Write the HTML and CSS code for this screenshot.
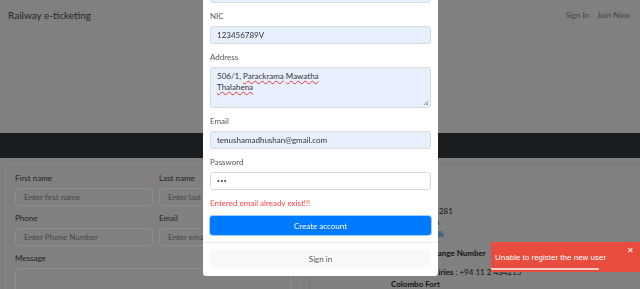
FILE: index.html
```html
<!DOCTYPE html>
<html lang="en">
<head>
    <meta charset="UTF-8">
    <meta name="viewport" content="width=device-width, initial-scale=1.0">
    <title>Railway e-ticketing</title>
    <link rel="stylesheet" href="styles.css">
</head>
<body>
    <!-- ナビバー (モーダル表示中なので暗い色) -->
    <nav class="navbar">
        <a href="#" class="brand">Railway e-ticketing</a>
        <div class="nav-links">
            <a href="#">Sign In</a>
            <a href="#">Join Now</a>
        </div>
    </nav>

    <div class="hero"></div>
    <div class="band"></div>

    <!-- お問い合わせセクション -->
    <div class="contact">
        <div class="card">
            <div class="row">
                <div class="field">
                    <label>First name</label>
                    <input type="text" placeholder="Enter first name">
                </div>
                <div class="field">
                    <label>Last name</label>
                    <input type="text" placeholder="Enter last name">
                </div>
                <div class="field">
                    <label>Phone</label>
                    <input type="text" placeholder="Enter Phone Number">
                </div>
                <div class="field">
                    <label>Email</label>
                    <input type="text" placeholder="Enter email">
                </div>
            </div>
            <div class="field">
                <label>Message</label>
                <textarea rows="3"></textarea>
            </div>
        </div>
        <div class="card info">
            <p>+94 11 2 434281</p>
            <p>+94 11 2 440</p>
            <p><a href="#">www.railway.lk</a></p>
            <p class="gap"><strong>General Exchange Number</strong></p>
            <p class="gap"><strong>Railway Enquiries</strong> : +94 11 2 434215</p>
            <p><strong>Colombo Fort</strong></p>
        </div>
    </div>

    <!-- 登録モーダル -->
    <div class="modal">
        <div class="modal-body">
            <div class="form-group">
                <input type="text" class="filled" value="">
            </div>
            <div class="form-group">
                <label>NIC</label>
                <input type="text" class="filled" value="123456789V">
            </div>
            <div class="form-group">
                <label>Address</label>
                <div class="textarea filled">506/1, <span class="typo">Parackrama</span> <span class="typo">Mawatha</span><br><span class="typo">Thalahena</span></div>
            </div>
            <div class="form-group">
                <label>Email</label>
                <input type="text" class="filled" value="tenushamadhushan@gmail.com">
            </div>
            <div class="form-group">
                <label>Password</label>
                <input type="password" class="pass" value="abc">
            </div>
            <p class="error">Entered email already exist!!!</p>
            <button class="btn btn-primary">Create account</button>
        </div>
        <div class="modal-footer">
            <button class="btn btn-light">Sign in</button>
        </div>
    </div>

    <!-- トースト通知 -->
    <div class="toast">
        <span>Unable to register the new user</span>
        <button class="toast-close">✕</button>
        <div class="toast-progress"></div>
    </div>
</body>
</html>
```

FILE: styles.css
```css
/* 背景ページはモーダルの影で暗くなった色をそのまま使う */
body {
    font-family: Lato, 'Open Sans', sans-serif;
    font-size: 8px;
    color: #141516;
    background: #808080;
    margin: 0;
    overflow: hidden;
}

a {
    text-decoration: none;
}

.navbar {
    display: flex;
    justify-content: space-between;
    align-items: center;
    height: 30px;
    padding: 0 10px 0 8px;
}

.brand {
    color: #262626;
    font-size: 10px;
}

.nav-links {
    display: flex;
    gap: 8px;
}

.nav-links a {
    color: #454545;
    font-size: 8px;
}

.hero {
    height: 103px;
}

.band {
    height: 25px;
    background: #1a1d20;
}

.contact {
    display: flex;
    gap: 8px;
    padding: 5px 0 0 5px;
}

.card {
    border: 1px solid #888;
    border-radius: 3px;
    padding: 9px 9px;
    width: 276px;
    height: 140px;
    flex-shrink: 0;
}

.row {
    display: grid;
    grid-template-columns: 138px 1fr;
    column-gap: 6px;
}

.field {
    margin-bottom: 7px;
}

.field label {
    display: block;
    color: #222;
    line-height: 11px;
    margin-bottom: 4px;
}

.field input,
.field textarea {
    box-sizing: border-box;
    width: 100%;
    height: 18px;
    border: 1px solid #8d8d8d;
    border-radius: 3px;
    padding: 0 8px;
    font-family: inherit;
    font-size: 8px;
    color: #333;
    background: #808080;
}

.field input::placeholder {
    color: #464849;
}

.field textarea {
    height: 40px;
    resize: none;
}

.info {
    width: 320px;
    border-color: #777;
    padding: 42px 10px 0 81px;
}

.info p {
    margin: 0;
    line-height: 11.5px;
    white-space: nowrap;
}

.info p.gap {
    margin-top: 7.5px;
}

.info a {
    color: #003e80;
}

.modal {
    position: fixed;
    left: 203px;
    bottom: 13px;
    width: 235px;
    background: #fff;
    border-radius: 3px;
}

.modal-body {
    padding: 0 7px 7px;
}

.form-group {
    margin-bottom: 7px;
}

.form-group label {
    display: block;
    color: #555;
    line-height: 12px;
    margin-bottom: 4px;
}

.form-group input,
.form-group .textarea {
    display: block;
    box-sizing: border-box;
    width: 100%;
    height: 18px;
    border: 1px solid #d6dbe0;
    border-radius: 3px;
    padding: 0 6px;
    font-family: inherit;
    font-size: 8px;
    color: #333;
    background: #fff;
}

.form-group .pass {
    font-size: 5px;
    letter-spacing: 0.5px;
    color: #444;
}

.form-group .textarea {
    position: relative;
    height: 41px;
    padding: 3px 6px;
    line-height: 11px;
}

.form-group .textarea::after {
    content: "";
    position: absolute;
    right: 2px;
    bottom: 2px;
    width: 4px;
    height: 4px;
    background: linear-gradient(135deg, transparent 45%, #999 45%, #999 55%, transparent 55%, transparent 75%, #999 75%);
}

.typo {
    text-decoration: underline wavy #e33;
    text-decoration-thickness: 1px;
}

.filled {
    background: #e8f0fe !important;
}

.error {
    color: #f44;
    margin: 0 0 6px;
    line-height: 13px;
}

.btn {
    display: block;
    width: 100%;
    border: none;
    border-radius: 3px;
    font-family: inherit;
    font-size: 8px;
    cursor: pointer;
}

.btn-primary {
    height: 19px;
    background: #007bff;
    color: #fff;
    box-shadow: 0 0 0 1px rgba(38, 143, 255, 0.45);
}

.btn-light {
    height: 18px;
    background: #f8f9fa;
    color: #555;
}

.modal-footer {
    border-top: 1px solid #e9ecef;
    padding: 7px 7px 8px;
}

.toast {
    position: fixed;
    left: 491px;
    top: 242px;
    width: 155px;
    height: 30px;
    background: #e74c3c;
    color: #fff;
    font-family: 'Liberation Sans', Arial, sans-serif;
    font-size: 8px;
    box-sizing: border-box;
    padding: 11px 4px;
}

.toast-close {
    position: absolute;
    right: 12px;
    top: 4px;
    background: none;
    border: none;
    color: #fff;
    font-size: 8px;
    padding: 0;
}

.toast-progress {
    position: absolute;
    left: 0;
    bottom: 2px;
    width: 108px;
    height: 2px;
    background: rgba(255, 255, 255, 0.7);
}
```
